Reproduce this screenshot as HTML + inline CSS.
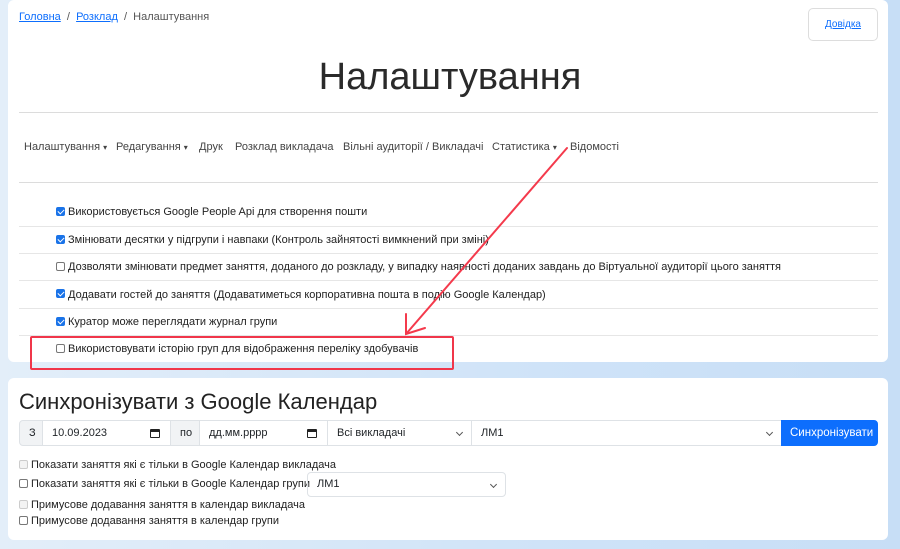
<!DOCTYPE html>
<html><head><meta charset="utf-8"><style>
*{box-sizing:border-box}
body{margin:0;width:900px;height:549px;overflow:hidden;background:linear-gradient(90deg,#e3eef9,#cfe3f8 60%,#c7def6);font-family:"Liberation Sans",sans-serif;color:#212529;position:relative}
.card{position:absolute;left:8px;width:880px;background:#fff;border-radius:6px}
a{color:#0d6efd}
.abs{position:absolute;white-space:nowrap}
.hr{position:absolute;left:11px;width:859px;height:1px;background:#dcdcdc}
.row{position:absolute;left:11px;width:859px;height:1px;background:#e6e6e6}
.cb{position:absolute;width:9px;height:9px;border:1px solid #777;border-radius:2px;background:#fff}
.cb.on{background:#1a73e8;border-color:#1a73e8}
.cb.on:after{content:"";position:absolute;left:2px;top:0px;width:3px;height:5px;border:solid #fff;border-width:0 1.5px 1.5px 0;transform:rotate(45deg)}
.cb.dis{border-color:#ccc;background:#f3f3f3}
.t{font-size:11px;color:#222}
.n{position:absolute;top:141px;font-size:11px;color:#444;white-space:nowrap}
.box{position:absolute;border:1px solid #dee2e6;height:26px;top:420px;font-size:11px;line-height:24px;padding-left:9px;background:#fff}
.chev{position:absolute;right:9px;top:9px;width:5px;height:5px;border:solid #555;border-width:0 1px 1px 0;transform:rotate(45deg)}
.cal{position:absolute;right:10px;top:8px;width:10px;height:9px;border:1.3px solid #222;border-top-width:3px;border-radius:1px}
</style></head><body>
<div class="card" style="top:0;height:362px"></div>
<div class="card" style="top:378px;height:162px"></div>

<div class="abs" style="left:19px;top:11px;font-size:11px;color:#555"><a href="#">Головна</a> &nbsp;/&nbsp; <a href="#">Розклад</a> &nbsp;/&nbsp; Налаштування</div>
<div class="abs" style="left:808px;top:8px;width:70px;height:33px;border:1px solid #ddd;border-radius:5px;font-size:10px;text-align:center;line-height:31px"><a href="#">Довідка</a></div>
<div class="abs" style="left:0;width:900px;text-align:center;top:56px;font-size:38px;font-weight:300;color:#2a2a2a">Налаштування</div>
<div class="hr" style="top:112px;left:19px"></div>
<span class="n" style="left:24px">Налаштування <span style="font-size:8px">▾</span></span>
<span class="n" style="left:116px">Редагування <span style="font-size:8px">▾</span></span>
<span class="n" style="left:199px">Друк</span>
<span class="n" style="left:235px">Розклад викладача</span>
<span class="n" style="left:343px">Вільні аудиторії / Викладачі</span>
<span class="n" style="left:492px">Статистика <span style="font-size:8px">▾</span></span>
<span class="n" style="left:570px">Відомості</span>
<div class="hr" style="top:182px;left:19px"></div>

<div class="row" style="top:226px;left:19px"></div>
<div class="row" style="top:253px;left:19px"></div>
<div class="row" style="top:280px;left:19px"></div>
<div class="row" style="top:308px;left:19px"></div>
<div class="row" style="top:335px;left:19px"></div>

<div class="cb on" style="left:56px;top:207px"></div><div class="abs t" style="left:68px;top:206px">Використовується Google People Api для створення пошти</div>
<div class="cb on" style="left:56px;top:235px"></div><div class="abs t" style="left:68px;top:234px">Змінювати десятки у підгрупи і навпаки (Контроль зайнятості вимкнений при зміні)</div>
<div class="cb" style="left:56px;top:262px"></div><div class="abs t" style="left:68px;top:261px">Дозволяти змінювати предмет заняття, доданого до розкладу, у випадку наявності доданих завдань до Віртуальної аудиторії цього заняття</div>
<div class="cb on" style="left:56px;top:289px"></div><div class="abs t" style="left:68px;top:289px">Додавати гостей до заняття (Додаватиметься корпоративна пошта в подію Google Календар)</div>
<div class="cb on" style="left:56px;top:317px"></div><div class="abs t" style="left:68px;top:316px">Куратор може переглядати журнал групи</div>
<div class="cb" style="left:56px;top:344px"></div><div class="abs t" style="left:68px;top:343px">Використовувати історію груп для відображення переліку здобувачів</div>
<div class="abs" style="left:30px;top:336px;width:424px;height:34px;border:2px solid #f0364a;border-radius:2px"></div>

<svg class="abs" style="left:0;top:0" width="900" height="549"><g stroke="#f43a4c" stroke-width="2" fill="none" stroke-linecap="round"><line x1="567" y1="148" x2="406" y2="334"/><polyline points="406,314 406,334 425,328"/></g></svg>

<div class="abs" style="left:19px;top:389px;font-size:22px;font-weight:500;color:#222">Синхронізувати з Google Календар</div>
<div class="box" style="left:19px;width:24px;background:#f1f3f5;border-radius:4px 0 0 4px">З</div>
<div class="box" style="left:42px;width:129px">10.09.2023<span class="cal"></span></div>
<div class="box" style="left:170px;width:30px;background:#f1f3f5">по</div>
<div class="box" style="left:199px;width:129px">дд.мм.рррр<span class="cal"></span></div>
<div class="box" style="left:327px;width:145px">Всі викладачі<span class="chev"></span></div>
<div class="box" style="left:471px;width:311px">ЛМ1<span class="chev"></span></div>
<div class="box" style="left:781px;width:97px;background:#0d6efd;border-color:#0d6efd;color:#fff;border-radius:0 4px 4px 0;font-size:11.5px;padding-left:8px">Синхронізувати</div>

<div class="cb dis" style="left:19px;top:460px"></div><div class="abs t" style="left:31px;top:459px">Показати заняття які є тільки в Google Календар викладача</div>
<div class="cb" style="left:19px;top:479px"></div><div class="abs t" style="left:31px;top:478px">Показати заняття які є тільки в Google Календар групи</div>
<div class="abs" style="left:307px;top:472px;width:199px;height:25px;border:1px solid #dee2e6;border-radius:4px;font-size:11px;line-height:23px;padding-left:9px">ЛМ1<span class="chev"></span></div>
<div class="cb dis" style="left:19px;top:500px"></div><div class="abs t" style="left:31px;top:499px">Примусове додавання заняття в календар викладача</div>
<div class="cb" style="left:19px;top:516px"></div><div class="abs t" style="left:31px;top:515px">Примусове додавання заняття в календар групи</div>
</body></html>
